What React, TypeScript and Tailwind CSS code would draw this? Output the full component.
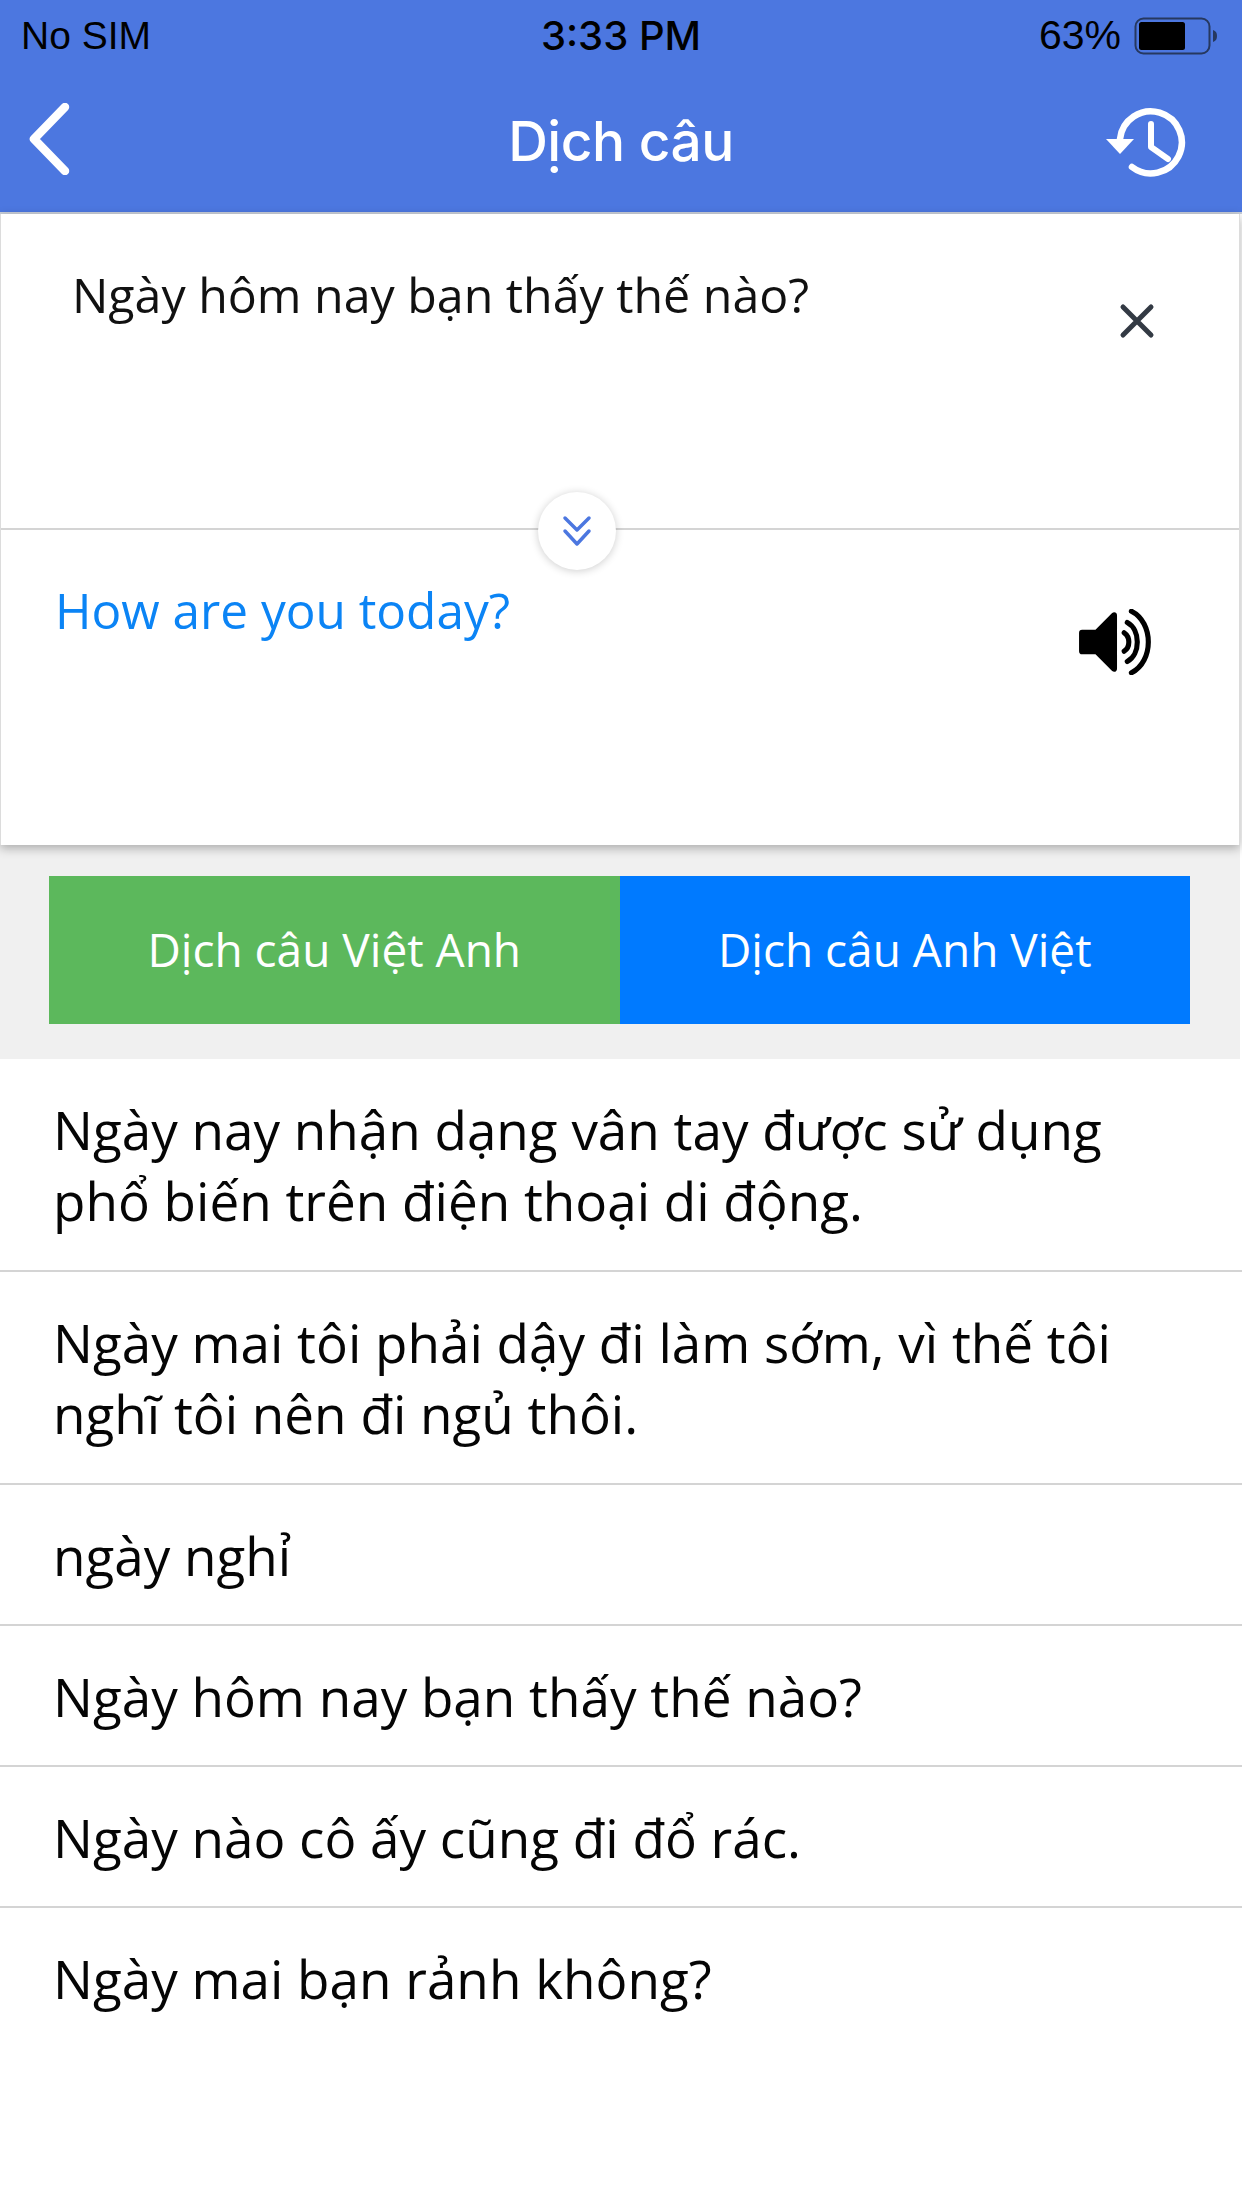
import React from "react";

const openSans = "font-['Open_Sans',sans-serif]";

const suggestions = [
  "Ngày nay nhận dạng vân tay được sử dụng phổ biến trên điện thoại di động.",
  "Ngày mai tôi phải dậy đi làm sớm, vì thế tôi nghĩ tôi nên đi ngủ thôi.",
  "ngày nghỉ",
  "Ngày hôm nay bạn thấy thế nào?",
  "Ngày nào cô ấy cũng đi đổ rác.",
  "Ngày mai bạn rảnh không?",
];

function BatteryIcon() {
  return (
    <svg width="88" height="38" viewBox="0 0 86 38" className="ml-[12px]">
      <rect x="1.5" y="1.5" width="74" height="35" rx="8" fill="none" stroke="#26385f" strokeWidth="2" />
      <rect x="5" y="5" width="46" height="28" rx="2.5" fill="#000" />
      <path d="M79 13c3 1 4 3 4 6s-1 5-4 6z" fill="#26385f" />
    </svg>
  );
}

function HistoryIcon() {
  return (
    <svg width="84" height="72" viewBox="0 0 84 72" fill="none">
      <path d="M14 34A31 31 0 1 1 26 62" stroke="#fff" strokeWidth="6.5" strokeLinecap="round" />
      <path d="M0 34h28L14 49z" fill="#fff" />
      <path d="M45 19v23l17 12" stroke="#fff" strokeWidth="6" strokeLinecap="round" strokeLinejoin="round" />
    </svg>
  );
}

function SpeakerIcon() {
  return (
    <svg width="78" height="66" viewBox="0 0 76 64" fill="none">
      <path d="M2 23a3 3 0 0 1 3-3h13L34 4c2-2 5-1 5 2v52c0 3-3 4-5 2L18 44H5a3 3 0 0 1-3-3z" fill="#000" />
      <path d="M46 23c6 4 6 14 0 18" stroke="#000" strokeWidth="5" strokeLinecap="round" />
      <path d="M49 13c13 7 13 31 0 38" stroke="#000" strokeWidth="5" strokeLinecap="round" />
      <path d="M53 2c22 11 22 49 0 60" stroke="#000" strokeWidth="5" strokeLinecap="round" />
    </svg>
  );
}

export default function App() {
  return (
    <div className={`relative w-[1242px] h-[2208px] overflow-hidden bg-white ${openSans}`}>
      {/* Status bar and navigation */}
      <header className="h-[214px] bg-[#4c77e0] border-b-2 border-[#c9cfd9] flex flex-col">
        <div className="h-[70px] pt-[2px] pl-[21px] pr-[21px] flex items-center justify-between text-black text-[39px] font-['Liberation_Sans',sans-serif]">
          <span className="w-[340px]">No SIM</span>
          <span className="font-medium text-[40px] font-['Inter',sans-serif]">3:33 PM</span>
          <span className="w-[340px] flex items-center justify-end text-[41px]">
            63%
            <BatteryIcon />
          </span>
        </div>
        <div className="flex-1 pl-[28px] pr-[52px] flex items-center justify-between text-white">
          <div className="w-[108px] pb-[4px]">
            <svg width="44" height="72" viewBox="0 0 44 72" fill="none">
              <path d="M37 4 6 36l31 32" stroke="#fff" strokeWidth="8.5" strokeLinecap="round" strokeLinejoin="round" />
            </svg>
          </div>
          <h1 className="text-[55px] font-medium font-['Inter',sans-serif] tracking-[-0.5px]">Dịch câu</h1>
          <HistoryIcon />
        </div>
      </header>

      {/* Translation card */}
      <section className="relative z-10 w-[1240px] h-[631px] bg-white border-x border-[#dcdcdc] shadow-[0_3px_10px_rgba(0,0,0,0.3)]">
        <div className="h-[316px] border-b-2 border-[#d4d4d4] pl-[71px] pr-[84px] pt-[47px] flex justify-between">
          <p className="text-[48.3px] leading-[66px] text-[#111]">Ngày hôm nay bạn thấy thế nào?</p>
          <svg width="36" height="36" viewBox="0 0 36 36" fill="none" className="mt-[42px]">
            <path d="M4 4l28 28M32 4 4 32" stroke="#333a44" strokeWidth="5" strokeLinecap="round" />
          </svg>
        </div>
        <div className="pl-[54px] pr-[84px] pt-[47px] flex justify-between items-start">
          <p className="text-[49.5px] leading-[66px] text-[#0b84f5]">How are you today?</p>
          <div className="mt-[32px]">
            <SpeakerIcon />
          </div>
        </div>
        <button className="absolute left-[537px] top-[278px] w-[78px] h-[78px] rounded-full bg-white shadow-[0_1px_8px_rgba(0,0,0,0.2)] flex items-center justify-center">
          <svg width="30" height="32" viewBox="0 0 30 32" fill="none">
            <path d="M3 3l12 12L27 3M3 16l12 13 12-13" stroke="#4c77e0" strokeWidth="3.5" strokeLinecap="round" strokeLinejoin="round" />
          </svg>
        </button>
      </section>

      {/* Translation direction buttons */}
      <div className="w-[1240px] h-[214px] bg-[#f0f0f0] pl-[49px] pr-[50px] pt-[31px]">
        <div className="flex h-[148px] text-white text-[46px]">
          <button className="flex-1 bg-[#5cb85c] pb-[2px]">Dịch câu Việt Anh</button>
          <button className="flex-1 bg-[#007aff] pb-[2px]">Dịch câu Anh Việt</button>
        </div>
      </div>

      {/* Suggested sentences */}
      <ul className="text-[#050505] text-[53px] leading-[71px]">
        {suggestions.map((text, i) => (
          <li
            key={text}
            className={`pl-[53px] pr-[80px] pt-[35px] pb-[33px] first:pt-[35px] first:pb-[34px] nth-[2]:pb-[34px] ${i < suggestions.length - 1 ? "border-b-2 border-[#d4d4d4]" : ""}`}
          >
            {text}
          </li>
        ))}
      </ul>
    </div>
  );
}
